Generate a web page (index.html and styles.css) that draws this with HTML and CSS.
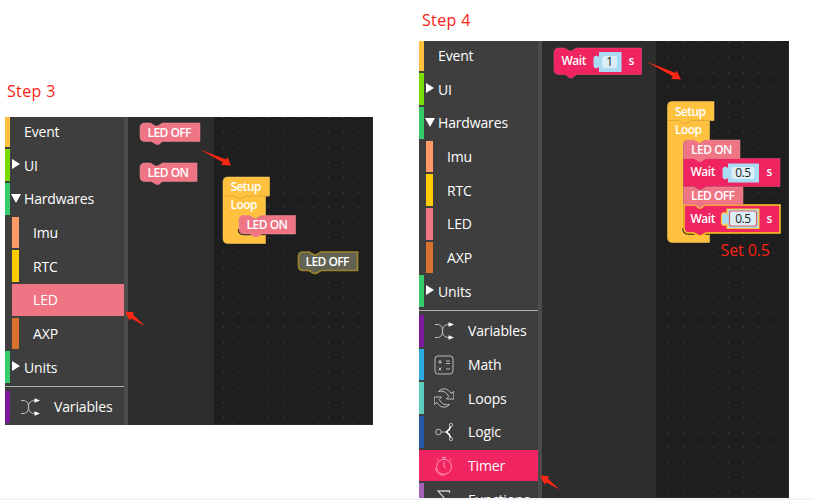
FILE: index.html
```
<!DOCTYPE html>
<html lang="en">
<head>
<meta charset="utf-8">
<title>Blink steps</title>
<link rel="stylesheet" href="styles.css">
</head>
<body>
<main class="steps">
  <section class="step step-three">
    <h2>Step 3</h2>
    <div class="editor">
      <nav class="toolbox">
        <div class="row event">Event</div>
        <div class="row ui"><i class="caret"></i>UI</div>
        <div class="row green"><i class="caret open"></i>Hardwares</div>
        <div class="row sub imu">Imu</div>
        <div class="row sub rtc">RTC</div>
        <div class="row sub led active">LED</div>
        <div class="row sub axp">AXP</div>
        <div class="row green"><i class="caret"></i>Units</div>
        <hr>
        <div class="row tool variables"><svg class="icon" viewBox="0 0 20 20"><path d="M1 3.500h2c3.500 0 5.500 2 5.500 6.500s2 6.500 7 6.500M1 16.500h2c3.500 0 5.500-2 5.500-6.500s2-6.500 7-6.500"/><path class="solid" d="M14.500 1.200l5.500 2.300-5.500 2.300zM14.500 14.200l5.500 2.300-5.500 2.300z"/></svg>Variables</div>
      </nav>
      <div class="flyout"></div>
      <div class="workspace"></div>
      <svg class="canvas" viewBox="5 117 368 308">
        <g class="led-block">
          <path d="M140 128q0-5 5-5h5.500l5 3h2l5-3H200v18.500H162.500l-4 3h-2l-5-3H145q-5 0-5-5z"/>
          <path d="M140 168q0-5 5-5h5.500l5 3h2l5-3H197v18.500H162.500l-4 3h-2l-5-3H145q-5 0-5-5z"/>
        </g>
        <path class="yellow-block" d="M223 182q0-5 5-5H269.500V196H265.500V215.500H261l-5 3h-2l-5-3H244q-5 0-5 5V230q0 5 5 5H265.500V243.500H228q-5 0-5-5z"/>
        <path class="seam" d="M223.500 196H234l5 3h2l5-3H269"/>
        <path class="mouth" d="M238.500 229q0 5.500 5.500 5.500H265.500"/>
        <path class="led-block" d="M239 220.500q0-5 5-5h5.500l5 3h2l5-3H295.500V234H262l-5 3h-2l-5-3H244q-5 0-5-5z"/>
        <path class="ghost" d="M298.500 257q0-5 5-5h5.500l5 3h2l5-3H357.500V270.500H321l-5 3h-2l-5-3H303.500q-5 0-5-5z"/>
        <g class="label">
          <text x="147.500" y="136.700" textLength="44">LED OFF</text>
          <text x="147.500" y="176.700" textLength="41.500">LED ON</text>
          <text x="230.500" y="190.700" textLength="31">Setup</text>
          <text x="230.500" y="209.200" textLength="27">Loop</text>
          <text x="246.500" y="229" textLength="41.500">LED ON</text>
          <text x="305.500" y="265.700" textLength="44">LED OFF</text>
        </g>
        <g class="arrow">
          <path d="M200 149.500L226 159.500l1.500-2.500L231 165.500l-10-.5 2-2.500z"/>
          <path d="M125 311.500l9 .700-1.200 2.300L145.500 326.500 131.500 318.500l-2 2z"/>
        </g>
      </svg>
    </div>
  </section>

  <section class="step step-four">
    <h2>Step 4</h2>
    <div class="editor">
      <nav class="toolbox">
        <div class="row event">Event</div>
        <div class="row ui"><i class="caret"></i>UI</div>
        <div class="row green"><i class="caret open"></i>Hardwares</div>
        <div class="row sub imu">Imu</div>
        <div class="row sub rtc">RTC</div>
        <div class="row sub led">LED</div>
        <div class="row sub axp">AXP</div>
        <div class="row green"><i class="caret"></i>Units</div>
        <hr>
        <div class="row tool variables"><svg class="icon" viewBox="0 0 20 20"><path d="M1 3.500h2c3.500 0 5.500 2 5.500 6.500s2 6.500 7 6.500M1 16.500h2c3.500 0 5.500-2 5.500-6.500s2-6.500 7-6.500"/><path class="solid" d="M14.500 1.200l5.500 2.300-5.500 2.300zM14.500 14.200l5.500 2.300-5.500 2.300z"/></svg>Variables</div>
        <div class="row tool math"><svg class="icon" viewBox="0 0 20 20"><rect x="1" y="1" width="18" height="18" rx="3"/><path d="M4 7h4M6 5v4M12 6h4M12 8.500h4M4.500 12.500l3 3M7.500 12.500l-3 3M12 14h4"/></svg>Math</div>
        <div class="row tool loops"><svg class="icon" viewBox="0 0 20 20"><path d="M4.500 3.500C8-.5 14 0 17 5.500L19.800 3.500V11H12.500l2.300-2.500C12.500 4 8.500 2.500 4.500 3.500zM15.500 16.500C12 20.500 6 20 3 14.500L.2 16.500V9H7.500l-2.300 2.500C7.500 16 11.500 17.500 15.500 16.500z"/></svg>Loops</div>
        <div class="row tool logic"><svg class="icon" viewBox="0 0 20 20"><circle cx="4.500" cy="10" r="2.800"/><circle cx="17" cy="3" r="1.600"/><circle cx="17" cy="17" r="1.600"/><path d="M7.300 10H12"/><path class="heavy" d="M16.300 4.500L15.500 7 12.500 10l3 3 .8 2.500"/></svg>Logic</div>
        <div class="row tool timer active"><svg class="icon" viewBox="0 0 20 20"><circle cx="10" cy="10.800" r="7.500"/><path d="M10 5.500v5.500l1.500 1.500M8 1.500h4M10 1.500v2M15.500 2.800l2 2M4.500 2.800l-2 2M1.500 12.500c1 4.500 4 6.700 8.500 6.700"/></svg>Timer</div>
        <div class="row tool functions"><svg class="icon" viewBox="0 0 20 20"><path d="M15.500 4V2H4l7 8-7 8h12v-3"/></svg>Functions</div>
      </nav>
      <div class="flyout"></div>
      <div class="workspace"></div>
      <svg class="canvas" viewBox="419 41 370 457">
        <path class="wait-block" d="M554 53q0-5 5-5h5.500l5 3h2l5-3H641.500V74.500H577l-5 3.500h-2l-5-3.500H559q-5 0-5-5z"/>
        <path class="value" d="M599 52H621.500V72H599V67c-2 2-5.500 2-5.500-2V59c0-4 3.500-4 5.500-2z"/>
        <rect class="field" x="602" y="56" width="15" height="12" rx="3"/>
        <path class="yellow-block" d="M667.500 106.500q0-5 5-5H714V120.500H709.500V140H705l-5 3h-2l-5-3H688q-5 0-5 5V228q0 6 5 6H709.500V242.500H672.500q-5 0-5-5z"/>
        <path class="seam" d="M668 120.500h10.500l5 3h2l5-3H714"/>
        <path class="mouth" d="M683 228q0 6 5.500 6H709.500"/>
        <path class="wait-block" d="M683.500 158.500H780V186.500H706l-5 3h-2l-5-3H683.500z"/>
        <path class="led-block" d="M683.500 145q0-5 5-5h5.500l5 3h2l5-3H740V158.500H706l-5 3h-2l-5-3H683.500z"/>
        <path class="wait-block selected" d="M684 205H695l4 3h2l4-3H780V233H706l-5 3h-2l-5-3H689q-5 0-5-5z"/>
        <path class="led-block" d="M683.500 187H694l5 3h2l5-3H743V204.500H705l-4 3h-2l-4-3H683.500z"/>
        <path class="value" d="M728 163.500H759V182.500H728V178c-2 2-5.500 2-5.500-2V170c0-4 3.500-4 5.500-2z"/>
        <rect class="field" x="731.500" y="167" width="23" height="12" rx="3"/>
        <path class="value selected" d="M727 209H759V228.500H727V224c-2 2-5.500 2-5.500-2V216c0-4 3.500-4 5.500-2z"/>
        <rect class="field editing" x="729.500" y="211" width="27" height="15" rx="2"/>
        <g class="label">
          <text x="561.500" y="65.300" textLength="25">Wait</text>
          <text x="628.500" y="65.300">s</text>
          <text x="675" y="115.700" textLength="31">Setup</text>
          <text x="675" y="134.200" textLength="27">Loop</text>
          <text x="691" y="153.700" textLength="41.500">LED ON</text>
          <text x="690.500" y="176" textLength="25">Wait</text>
          <text x="766.500" y="176">s</text>
          <text x="691" y="200" textLength="44">LED OFF</text>
          <text x="690.500" y="222.500" textLength="25">Wait</text>
          <text x="766.500" y="222.500">s</text>
        </g>
        <g class="number">
          <text x="609.500" y="66.200">1</text>
          <text x="743" y="177">0.5</text>
          <text x="743" y="223.200">0.5</text>
        </g>
        <text class="note" x="720.500" y="255.500" textLength="49.500">Set 0.5</text>
        <g class="arrow">
          <path d="M646.500 61.500L675.500 73l1-2.500L681 79.500l-10-.5 2-2.500z"/>
          <path d="M540 475.500l9 .700-1.200 2.300L559.500 489.500 546.500 482.500l-2 2z"/>
        </g>
      </svg>
    </div>
  </section>
</main>
<footer class="strip"></footer>
</body>
</html>
```
FILE: styles.css
```
* { box-sizing: border-box; }
body {
  margin: 0;
  width: 814px;
  height: 500px;
  overflow: hidden;
  background: #fff;
  font-family: "Open Sans", "Noto Sans", sans-serif;
}
.steps {
  display: flex;
  align-items: flex-start;
  gap: 46px;
  height: 498px;
  padding-left: 5px;
}
.strip { height: 2px; background: #f1f4fb; }
.step-three { width: 368px; padding-top: 79px; }
.step-four { width: 370px; padding-top: 8px; }
h2 {
  margin: 0;
  padding-left: 2px;
  height: 38px;
  font-size: 16px;
  line-height: 24px;
  font-weight: 400;
  letter-spacing: .35px;
  color: #fb2113;
}
.step-four h2 { height: 33px; padding-left: 3px; }
.editor {
  position: relative;
  display: flex;
  overflow: hidden;
  background-color: #1e1e1e;
  background-image: radial-gradient(circle at 7.500px 7.500px, #484848 .8px, transparent .9px);
  background-size: 15px 15px;
}
.step-three .editor { height: 308px; background-position: 1px 8px; }
.step-four .editor { height: 457px; background-position: 2px 9px; }
.toolbox {
  flex: none;
  width: 123px;
  background: #3e3e3e;
  border-right: 4px solid #4b4b4b;
}
.flyout { flex: none; width: 85.500px; background: rgba(48, 48, 48, .85); }
.step-four .flyout { width: 114px; }
.workspace { flex: 1; border: solid #2b2b2b; border-width: 0 1px 1px 0; }
.row {
  display: flex;
  align-items: center;
  position: relative;
  height: 31.700px;
  margin-bottom: 2px;
  padding-left: 14px;
  border-left: 5px solid;
  font-size: 14px;
  letter-spacing: -.15px;
  -webkit-text-fill-color: #fff;
}
.row:first-child { height: 30.200px; padding-bottom: 2px; }
.event { border-color: #ffc13e; }
.ui { border-color: #79dd00; }
.green { border-color: #36cc69; }
.sub { margin-left: 7px; border-left-width: 7px; padding-left: 14px; }
.imu { border-color: #ff9966; }
.rtc { border-color: #ffcc00; }
.led { border-color: #ef7585; }
.axp { border-color: #d9702d; }
.led.active { background: #ef7585; }
.caret {
  position: absolute;
  left: 2px;
  top: 10px;
  border: 5px solid transparent;
  border-left: 8.500px solid #fff;
  border-right: 0;
}
.caret.open {
  left: 1px;
  top: 11px;
  border: 5px solid transparent;
  border-top: 9px solid #fff;
  border-bottom: 0;
}
hr {
  height: 1px;
  margin: 3px 0 4px;
  border: 0;
  background: #b0b0b0;
}
.tool { padding-left: 10px; }
.icon {
  width: 20px;
  height: 20px;
  margin-right: 14px;
  fill: none;
  stroke: #c9c9c9;
  stroke-width: .9;
}
.icon .solid { fill: #fff; stroke: none; }
.icon .heavy { stroke: #fff; stroke-width: 1.700; }
.variables { border-color: #7d1a9b; }
.math { border-color: #2dabe2; }
.loops { border-color: #5ccbba; }
.logic { border-color: #2457a4; }
.timer { border-color: #f02460; background: #f02460; }
.timer .icon { stroke: #ff9fbb; }
.functions { border-color: #a45fb6; }
.functions .icon { stroke-width: 1.300; }
.canvas { position: absolute; inset: 0; width: 100%; height: 100%; }
.led-block { fill: #ef7585; stroke: #f38f9b; stroke-width: .5; }
.yellow-block { fill: #ffc13e; stroke: #ffce61; stroke-width: .5; }
.seam { fill: none; stroke: #d6a335; stroke-width: .8; }
.mouth { fill: none; stroke: #2a2415; stroke-width: 1.500; }
.wait-block { fill: #f02460; stroke: #f64e7d; stroke-width: .5; }
.wait-block.selected { stroke: #ffc91f; stroke-width: 1.500; }
.ghost { fill: #626253; stroke: #9b852b; stroke-width: 1.700; }
.value { fill: #a9dbf2; }
.value.selected { stroke: #ffc92b; stroke-width: 1.200; }
.field { fill: #dceff8; }
.field.editing { stroke: #df665f; stroke-width: 1.200; }
.label { font-size: 12px; font-weight: 600; fill: #fff; }
.number { font-size: 12px; fill: #222; text-anchor: middle; letter-spacing: -.4px; }
.note { font-size: 16px; fill: #fb2113; }
.arrow { fill: #ff2712; }
```
